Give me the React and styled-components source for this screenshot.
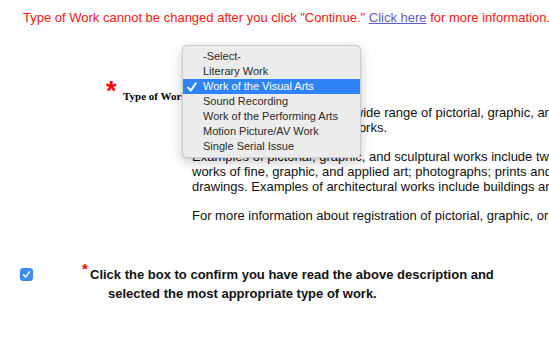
import React, {useState} from "react";
import styled, {createGlobalStyle} from "styled-components";

const GlobalStyle = createGlobalStyle`
  html, body {
    margin: 0;
    padding: 0;
    background: #ffffff;
    overflow: hidden;
  }
  body {
    font-family: "Liberation Sans", Arial, sans-serif;
  }
`;

const workTypes = [
  "-Select-",
  "Literary Work",
  "Work of the Visual Arts",
  "Sound Recording",
  "Work of the Performing Arts",
  "Motion Picture/AV Work",
  "Single Serial Issue",
];

const MenuCheck = () => (
  <svg width="10" height="10" viewBox="0 0 10 10">
    <path
      d="M1.2 5.6 L3.8 8.6 L8.8 1.2"
      fill="none"
      stroke="#ffffff"
      strokeWidth="1.9"
      strokeLinecap="round"
      strokeLinejoin="round"
    />
  </svg>
);

const App = () => {
  const [selected, setSelected] = useState("Work of the Visual Arts");
  const [confirmed, setConfirmed] = useState(true);

  return (
    <>
      <GlobalStyle />
      <Page>
        <Notice>
          Type of Work cannot be changed after you click "Continue."{" "}
          <a href="#help">Click here</a> for more information.
        </Notice>

        <FieldRow>
          <LabelCell>
            <Asterisk>*</Asterisk>
            <FieldLabel>Type of Work:</FieldLabel>
          </LabelCell>

          <FieldCell>
            <SelectBox>
              {selected}
              <Menu>
                {workTypes.map((t) => (
                  <MenuItem
                    key={t}
                    $active={t === selected}
                    onClick={() => setSelected(t)}
                  >
                    <Check>{t === selected && <MenuCheck />}</Check>
                    {t}
                  </MenuItem>
                ))}
              </Menu>
            </SelectBox>

            <Description>
              This category also covers a wide range of pictorial, graphic, and sculptural
              <br />
              art, as well as architectural works.
            </Description>
            <Description>
              Examples of pictorial, graphic, and sculptural works include two-dimensional and three-dimensional
              <br />
              works of fine, graphic, and applied art; photographs; prints and art reproductions; maps, globes,
              <br />
              drawings. Examples of architectural works include buildings and architectural plans.
            </Description>
            <Description>
              For more information about registration of pictorial, graphic, or sculptural works, see Circular 40.
            </Description>
          </FieldCell>
        </FieldRow>

        <ConfirmRow>
          <CheckCell>
            <CheckBox $on={confirmed} onClick={() => setConfirmed(!confirmed)}>
              {confirmed && (
                <svg width="9" height="9" viewBox="0 0 9 9">
                  <path
                    d="M1.5 4.8 L3.6 7 L7.6 1.8"
                    fill="none"
                    stroke="#ffffff"
                    strokeWidth="1.5"
                    strokeLinecap="round"
                    strokeLinejoin="round"
                  />
                </svg>
              )}
            </CheckBox>
          </CheckCell>
          <ConfirmText>
            <div className="first">
              <SmallAsterisk>*</SmallAsterisk>Click the box to confirm you have read the above description and
            </div>
            <div className="second">selected the most appropriate type of work.</div>
          </ConfirmText>
        </ConfirmRow>
      </Page>
    </>
  );
};

export default App;

const Page = styled.div`
  width: 1000px;
  white-space: nowrap;
`;

const Notice = styled.div`
  padding: 10px 0 0 23px;
  font-size: 13px;
  line-height: 15px;
  color: #ff1414;

  a {
    color: #5c5cd0;
    text-decoration: underline;
  }
`;

const FieldRow = styled.div`
  display: grid;
  grid-template-columns: 192px 1fr;
  margin-top: 53px;
`;

const LabelCell = styled.div`
  display: flex;
  align-items: flex-start;
  padding-left: 106px;
`;

const Asterisk = styled.span`
  color: #ff0000;
  font-family: "Liberation Sans", Arial, sans-serif;
  font-weight: bold;
  font-size: 27px;
  line-height: 20px;
  margin-top: 3px;
  width: 17px;
`;

const FieldLabel = styled.span`
  font-family: "Liberation Serif", "Times New Roman", serif;
  font-weight: bold;
  font-size: 11px;
  line-height: 14px;
  margin-top: 11px;
  color: #000;
`;

const FieldCell = styled.div`
  display: flex;
  flex-direction: column;
  align-items: flex-start;
`;

const SelectBox = styled.div`
  position: relative;
  width: 160px;
  height: 15px;
  font-size: 11px;
  line-height: 15px;
  padding-left: 10px;
  color: #222;
  margin-bottom: 12px;
`;

const Menu = styled.div`
  position: absolute;
  left: -10px;
  top: -33px;
  width: 177px;
  padding: 3px 0 3px;
  background: #ececec;
  border: 1px solid #cdcdcd;
  border-radius: 5px;
  box-shadow: 0 4px 12px rgba(0, 0, 0, 0.22), 0 0 1px rgba(0, 0, 0, 0.2);
  z-index: 5;
`;

const MenuItem = styled.div`
  display: flex;
  align-items: center;
  height: 15px;
  font-size: 11px;
  line-height: 15px;
  color: ${(p) => (p.$active ? "#ffffff" : "#2a2a2a")};
  background: ${(p) => (p.$active ? "#2f83f6" : "transparent")};
  cursor: default;
`;

const Check = styled.span`
  display: flex;
  align-items: center;
  width: 20px;
  height: 15px;
  padding-left: 4px;
  box-sizing: border-box;
`;

const Description = styled.p`
  margin: 0 0 14px;
  font-size: 13px;
  line-height: 15px;
  color: #111;
`;

const ConfirmRow = styled.div`
  display: flex;
  align-items: flex-start;
  margin-top: 27px;
`;

const CheckCell = styled.div`
  width: 82px;
  padding: 4px 0 0 20px;
  box-sizing: border-box;
`;

const CheckBox = styled.div`
  width: 13px;
  height: 13px;
  border-radius: 3px;
  box-sizing: border-box;
  display: flex;
  align-items: center;
  justify-content: center;
  background: ${(p) => (p.$on ? "#3a8df5" : "#ffffff")};
  border: 1px solid ${(p) => (p.$on ? "#3584ea" : "#b5b5b5")};
`;

const ConfirmText = styled.div`
  font-size: 13px;
  font-weight: bold;
  line-height: 19px;
  color: #111;

  .second {
    padding-left: 26px;
  }
`;

const SmallAsterisk = styled.span`
  color: #ff0000;
  font-size: 15px;
  display: inline-block;
  width: 8px;
  vertical-align: 5px;
  line-height: 10px;
`;
